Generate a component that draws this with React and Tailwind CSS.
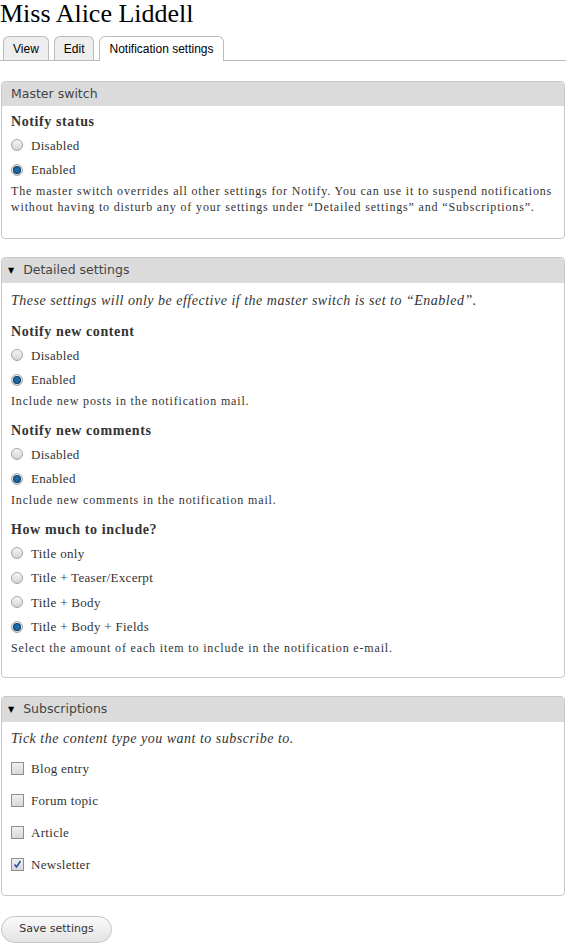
import { useState } from "react";

const serif = "font-['Liberation_Serif',serif]";

function Radio({ checked }) {
  return (
    <span className="inline-flex w-[12px] h-[12px] rounded-full border border-[#a4a4a4] bg-gradient-to-b from-[#f6f6f6] to-[#d4d4d4] items-center justify-center shrink-0">
      {checked && <span className="w-[6px] h-[6px] rounded-full bg-[#1b6aa8] ring-1 ring-[#0c3a63]"></span>}
    </span>
  );
}

function Check({ checked }) {
  return (
    <span className="inline-flex w-[13px] h-[13px] border border-[#8f8f8f] bg-gradient-to-b from-[#f0f0f0] to-[#d8d8d8] items-center justify-center shrink-0">
      {checked && (
        <svg width="9" height="9" viewBox="0 0 9 9">
          <path d="M1.5 4.5 L3.5 7 L7.5 1" fill="none" stroke="#2a4fa8" strokeWidth="1.6" />
        </svg>
      )}
    </span>
  );
}

function Option({ label, checked, onClick, box }) {
  return (
    <div className={"flex items-center cursor-pointer h-[24.5px] " + (box ? "gap-[7px]" : "gap-[8px]")} onClick={onClick}>
      {box ? <Check checked={checked} /> : <Radio checked={checked} />}
      <span className="text-[13px] tracking-[0.3px] text-[#333]">{label}</span>
    </div>
  );
}

function Heading({ children, first }) {
  return (
    <div className={"text-[14px] font-bold tracking-[0.6px] text-[#333] h-[22px] mb-px flex items-center " + (first ? "-mt-[2px]" : "mt-[10px]")}>
      {children}
    </div>
  );
}

function Desc({ children }) {
  return <p className="text-[12px] leading-[16px] tracking-[0.84px] text-[#333] mt-[1px]">{children}</p>;
}

function Fieldset({ title, arrow, children, pb }) {
  return (
    <div className="border border-[#c8c8c8] rounded-[4px] overflow-hidden">
      <div
        className={
          "bg-[#dbdbdb] flex items-center font-['DejaVu_Sans',sans-serif] text-[12.5px] text-[#444] " +
          (arrow ? "h-[25px] pl-[6px] gap-[9px]" : "h-[24px] pl-[9px]")
        }
      >
        {arrow && <span className="text-[8px] text-black">▼</span>}
        <span>{title}</span>
      </div>
      <div className={"pl-[9px] pr-[4px] pt-[6px] " + pb}>{children}</div>
    </div>
  );
}

export default function App() {
  const [master, setMaster] = useState("on");
  const [content, setContent] = useState("on");
  const [comments, setComments] = useState("on");
  const [amount, setAmount] = useState("fields");
  const [subs, setSubs] = useState({ blog: false, forum: false, article: false, news: true });

  return (
    <div className="bg-white min-h-screen w-[566px]">
      <h1 className="font-['Liberation_Serif',serif] text-[26px] leading-[28px] text-black">Miss Alice Liddell</h1>

      <div className="flex gap-[5px] pl-[3px] mt-[8px] border-b border-[#bbb] font-['Liberation_Sans',sans-serif] text-[12px] text-black">
        <div className="h-[24px] px-[9px] flex items-center border border-b-0 border-[#bbb] rounded-t-[6px] bg-[#eee]">View</div>
        <div className="h-[24px] px-[9px] flex items-center border border-b-0 border-[#bbb] rounded-t-[6px] bg-[#eee]">Edit</div>
        <div className="h-[25px] px-[9px] -mb-px flex items-center border border-b-0 border-[#bbb] rounded-t-[6px] bg-white">Notification settings</div>
      </div>

      <div className={"px-px pt-[20px] flex flex-col gap-[18px] " + serif}>
        <Fieldset title="Master switch" pb="pb-[23px]">
          <Heading first>Notify status</Heading>
          <Option label="Disabled" checked={master === "off"} onClick={() => setMaster("off")} />
          <Option label="Enabled" checked={master === "on"} onClick={() => setMaster("on")} />
          <Desc>
            The master switch overrides all other settings for Notify. You can use it to suspend notifications without having to disturb any of your settings under “Detailed settings” and “Subscriptions”.
          </Desc>
        </Fieldset>

        <Fieldset title="Detailed settings" arrow pb="pb-[21px]">
          <p className="italic text-[14px] tracking-[0.5px] text-[#333] h-[20px] mt-[1px] flex items-center">These settings will only be effective if the master switch is set to “Enabled”.</p>
          <Heading>Notify new content</Heading>
          <Option label="Disabled" checked={content === "off"} onClick={() => setContent("off")} />
          <Option label="Enabled" checked={content === "on"} onClick={() => setContent("on")} />
          <Desc>Include new posts in the notification mail.</Desc>
          <Heading>Notify new comments</Heading>
          <Option label="Disabled" checked={comments === "off"} onClick={() => setComments("off")} />
          <Option label="Enabled" checked={comments === "on"} onClick={() => setComments("on")} />
          <Desc>Include new comments in the notification mail.</Desc>
          <Heading>How much to include?</Heading>
          <Option label="Title only" checked={amount === "title"} onClick={() => setAmount("title")} />
          <Option label="Title + Teaser/Excerpt" checked={amount === "teaser"} onClick={() => setAmount("teaser")} />
          <Option label="Title + Body" checked={amount === "body"} onClick={() => setAmount("body")} />
          <Option label="Title + Body + Fields" checked={amount === "fields"} onClick={() => setAmount("fields")} />
          <Desc>Select the amount of each item to include in the notification e-mail.</Desc>
        </Fieldset>

        <Fieldset title="Subscriptions" arrow pb="pb-[18px]">
          <p className="italic text-[14px] tracking-[0.5px] text-[#333] h-[20px] flex items-center">Tick the content type you want to subscribe to.</p>
          <div className="flex flex-col gap-[7.5px] mt-[8px]">
            <Option box label="Blog entry" checked={subs.blog} onClick={() => setSubs({ ...subs, blog: !subs.blog })} />
            <Option box label="Forum topic" checked={subs.forum} onClick={() => setSubs({ ...subs, forum: !subs.forum })} />
            <Option box label="Article" checked={subs.article} onClick={() => setSubs({ ...subs, article: !subs.article })} />
            <Option box label="Newsletter" checked={subs.news} onClick={() => setSubs({ ...subs, news: !subs.news })} />
          </div>
        </Fieldset>
      </div>

      <button
        type="button"
        className="mt-[20px] ml-px h-[27px] w-[111px] rounded-full border border-[#c4c4c4] bg-gradient-to-b from-[#fafafa] to-[#e3e3e3] font-['DejaVu_Sans',sans-serif] text-[11px] text-[#333]"
      >
        Save settings
      </button>
    </div>
  );
}
